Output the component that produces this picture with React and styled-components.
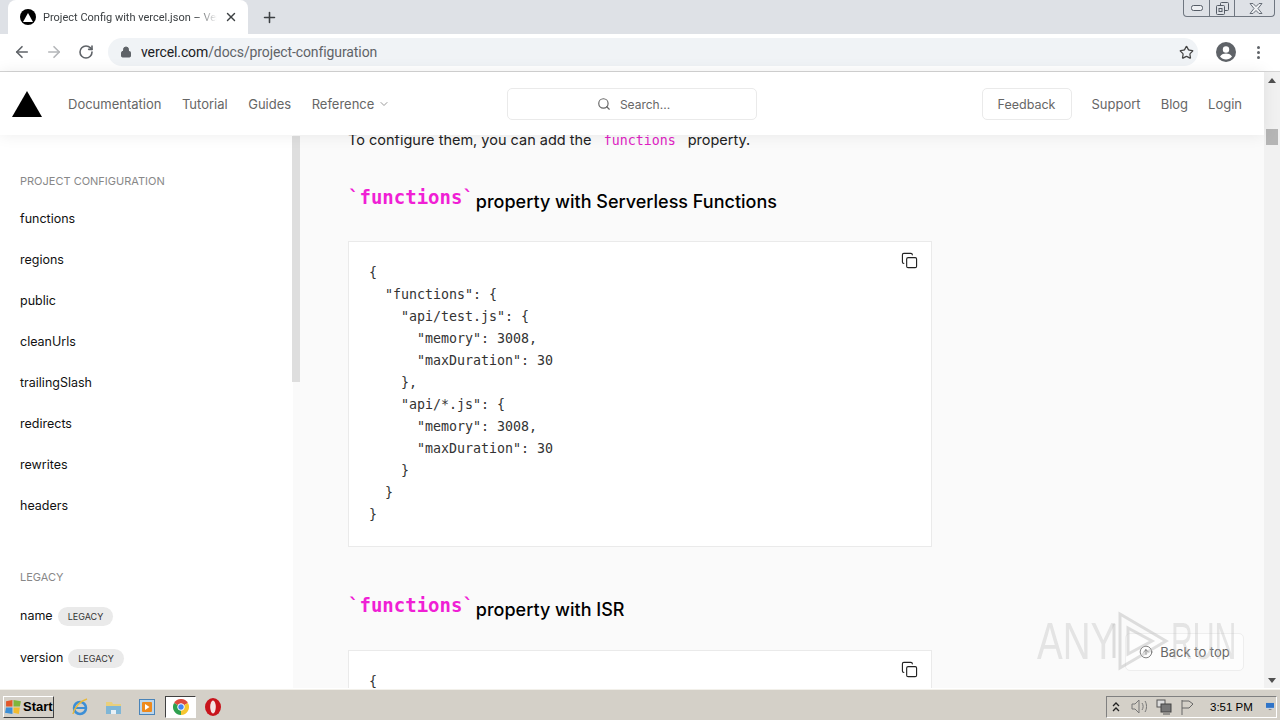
import React from 'react';
import styled, { createGlobalStyle } from 'styled-components';
import { Search, ChevronDown, Copy, ArrowUpCircle, ArrowLeft, ArrowRight, RotateCw, Lock, Star, X, Plus } from 'lucide-react';

const Global = createGlobalStyle`
  html, body { margin: 0; padding: 0; height: 720px; overflow: hidden; background: #fff; }
  body { font-family: Inter, "Noto Sans", sans-serif; }
  * { box-sizing: border-box; }
`;

const Screen = styled.div`
  position: relative;
  width: 1280px;
  height: 720px;
  display: flex;
  flex-direction: column;
  overflow: hidden;
`;

/* browser chrome */
const TabStrip = styled.div`
  height: 34px;
  background: #dee1e6;
  display: flex;
  padding-left: 8px;
  position: relative;
`;
const Tab = styled.div`
  width: 240px;
  height: 34px;
  background: #fff;
  border-radius: 8px 8px 0 0;
  display: flex;
  align-items: center;
  padding: 0 9px 0 12px;
  gap: 7px;
`;
const Favicon = styled.span`
  width: 16px;
  height: 16px;
  border-radius: 50%;
  background: #000;
  display: flex;
  align-items: center;
  justify-content: center;
  flex-shrink: 0;
`;
const TabTitle = styled.span`
  font: 11px Roboto, sans-serif;
  color: #3c4043;
  width: 174px;
  white-space: nowrap;
  overflow: hidden;
  -webkit-mask-image: linear-gradient(to right, #000 88%, transparent);
`;
const NewTab = styled.span`
  margin-left: 13px;
  height: 34px;
  display: flex;
  align-items: center;
  color: #3c4043;
`;
const WindowButtons = styled.div`
  position: absolute;
  right: 5px;
  top: 0;
  width: 92px;
  height: 17px;
  display: grid;
  grid-template-columns: 25px 25px 42px;
  border: 1px solid #6f7680;
  border-top: none;
  border-radius: 0 0 4px 4px;
`;
const WindowButton = styled.span`
  display: flex;
  align-items: center;
  justify-content: center;
  & + & { border-left: 1px solid #6f7680; }
`;
const Toolbar = styled.div`
  height: 38px;
  background: #fff;
  border-bottom: 1px solid #d5d5d5;
  display: flex;
  align-items: center;
  padding: 0 0 1px 13px;
`;
const NavIcon = styled.span`
  width: 18px;
  display: flex;
  justify-content: center;
  margin-right: ${p => p.$gap}px;
  color: ${p => p.$faded ? '#b4b6b9' : '#5f6368'};
`;
const Omnibox = styled.div`
  width: 1090px;
  height: 28px;
  border-radius: 14px;
  background: #f0f3f6;
  margin-left: 13px;
  display: flex;
  align-items: center;
  padding: 0 4px 0 12px;
  color: #5f6368;
`;
const Url = styled.span`
  font: 14px Roboto, sans-serif;
  color: #202124;
  margin-left: 9px;
  flex: 1;
  letter-spacing: -0.1px;
  & span { color: #5f6368; }
`;
const Avatar = styled.span`
  margin-left: 18px;
  width: 20px;
  height: 20px;
  display: block;
`;
const MenuDots = styled.span`
  margin-left: 21px;
  display: flex;
  flex-direction: column;
  gap: 2px;
  & i { width: 3px; height: 3px; border-radius: 50%; background: #5f6368; display: block; }
`;

/* page */
const Viewport = styled.div`
  flex: 1;
  height: 619px;
  display: flex;
  min-height: 0;
`;
const Page = styled.div`
  width: 1264px;
  display: flex;
  flex-direction: column;
  background: #fafafa;
`;
const Header = styled.header`
  height: 63px;
  background: #fff;
  box-shadow: 0 0 15px rgba(0, 0, 0, 0.08);
  display: flex;
  align-items: center;
  padding: 1px 22px 0 12px;
  position: relative;
  z-index: 2;
  flex-shrink: 0;
`;
const Nav = styled.nav`
  display: flex;
  align-items: center;
  gap: 20.5px;
  margin-left: 26px;
  width: 439px;
`;
const NavLink = styled.span`
  font-size: 13px;
  color: #666;
  display: flex;
  align-items: center;
  gap: 4px;
  white-space: nowrap;
`;
const SearchBox = styled.div`
  width: 250px;
  height: 32px;
  border: 1px solid #eaeaea;
  border-radius: 5px;
  display: flex;
  align-items: center;
  justify-content: center;
  gap: 9px;
  padding-left: 3px;
  font-size: 12px;
  color: #666;
`;
const HeaderRight = styled.div`
  margin-left: auto;
  display: flex;
  align-items: center;
  gap: 20px;
`;
const Feedback = styled.span`
  width: 90px;
  height: 32px;
  border: 1px solid #eaeaea;
  border-radius: 5px;
  font-size: 12.5px;
  color: #666;
  display: flex;
  align-items: center;
  justify-content: center;
`;
const Body = styled.div`
  flex: 1;
  display: flex;
  min-height: 0;
`;
const Sidebar = styled.aside`
  width: 293px;
  background: #fff;
  padding: 0 20px;
  overflow: hidden;
  flex-shrink: 0;
`;
const SideTitle = styled.div`
  font-size: 11px;
  color: #888;
  height: 18px;
  line-height: 18px;
  margin: ${p => p.$top}px 0 ${p => p.$bottom}px;
  white-space: nowrap;
`;
const SideItem = styled.div`
  height: ${p => p.$h || 41}px;
  display: flex;
  align-items: center;
  gap: 5px;
  font-size: 12.5px;
  color: #111;
`;
const Chip = styled.span`
  height: 19px;
  padding: 0 10px;
  border-radius: 10px;
  background: #eaeaea;
  font-size: 9px;
  color: #333;
  display: flex;
  align-items: center;
  margin-top: 2px;
`;
const Rail = styled.div`
  width: 8px;
  margin-left: -1px;
  flex-shrink: 0;
  position: relative;
  z-index: 1;
`;
const RailThumb = styled.div`
  height: 246px;
  margin-top: 1px;
  background: #dedede;
`;
const Main = styled.main`
  flex: 1;
  overflow: hidden;
  padding: 0 0 0 48px;
`;
const Intro = styled.p`
  margin: -7px 0 0;
  height: 24px;
  line-height: 24px;
  font-size: 14.5px;
  color: #222;
  display: flex;
  white-space: pre;
`;
const InlineCode = styled.code`
  font: 13.3px "DejaVu Sans Mono", monospace;
  line-height: 26px;
  color: #e01fc4;
  margin: 0 12px 0 8px;
`;
const Heading = styled.h2`
  margin: ${p => p.$top}px 0 0;
  height: 28px;
  display: flex;
  align-items: flex-end;
  font-size: 18px;
  font-weight: 500;
  line-height: 28px;
  color: #000;
  white-space: pre;
`;
const HeadingCode = styled.code`
  font: bold 19px "DejaVu Sans Mono", monospace;
  color: #f01fd5;
  position: relative;
  top: -8px;
  margin-right: 2px;
`;
const CodeCard = styled.div`
  position: relative;
  width: 584px;
  margin-top: ${p => p.$top}px;
  padding: 20px 20px 20px;
  background: #fff;
  border: 1px solid #eaeaea;
`;
const CodeText = styled.pre`
  margin: 0;
  font: 13.3px/22px "DejaVu Sans Mono", monospace;
  color: #333;
`;
const CopyButton = styled.span`
  position: absolute;
  top: 10px;
  right: 13px;
  color: #222;
  display: flex;
`;
const Scrollbar = styled.div`
  width: 16px;
  background: #f1f1f1;
  display: flex;
  flex-direction: column;
  align-items: center;
  position: relative;
`;
const ArrowUp = styled.span`
  margin-top: 6px;
  border: 4px solid transparent;
  border-top: none;
  border-bottom: 5px solid #505050;
`;
const ScrollThumb = styled.div`
  width: 12px;
  height: 16px;
  margin-top: 46px;
  background: #b5b5b5;
`;
const ArrowDown = styled.span`
  margin-top: auto;
  margin-bottom: 5px;
  border: 4px solid transparent;
  border-bottom: none;
  border-top: 5px solid #505050;
`;
const BackToTop = styled.div`
  position: absolute;
  left: 1125px;
  top: 633px;
  width: 119px;
  height: 38px;
  background: rgba(255, 255, 255, 0.6);
  border: 1px solid #eee;
  border-radius: 5px;
  display: flex;
  align-items: center;
  justify-content: center;
  gap: 7px;
  font-size: 13px;
  color: #666;
  z-index: 3;
`;
const Watermark = styled.div`
  position: absolute;
  left: 1037px;
  top: 610px;
  width: 200px;
  height: 62px;
  display: flex;
  align-items: center;
  z-index: 4;
  pointer-events: none;
  & svg { flex-shrink: 0; margin: 0 1px 0 5px; }
`;
const WatermarkWord = styled.span`
  display: block;
  width: ${p => p.$w}px;
  font: 52px/62px "Liberation Sans", sans-serif;
  color: rgba(185, 185, 185, 0.34);
  transform: scaleX(${p => p.$scale});
  transform-origin: left;
  white-space: nowrap;
`;

/* taskbar */
const Taskbar = styled.div`
  height: 31px;
  background: #d4d0c8;
  border-top: 1px solid #f2f0ea;
  margin-top: 1px;
  display: flex;
  align-items: center;
  padding: 3px 3px 0;
  flex-shrink: 0;
`;
const StartButton = styled.div`
  width: 51px;
  height: 22px;
  background: #d4d0c8;
  border: 1px solid;
  border-color: #fff #404040 #404040 #fff;
  display: flex;
  align-items: center;
  gap: 1px;
  padding-left: 1px;
  font: bold 13px "Liberation Sans", sans-serif;
  color: #000;
`;
const Quick = styled.div`
  display: flex;
  align-items: center;
  margin-left: 9px;
`;
const QuickSlot = styled.span`
  width: ${p => p.$w || 33.5}px;
  height: 22px;
  display: flex;
  align-items: center;
  justify-content: center;
  ${p => p.$active && `
    margin-left: 1.5px;
    background: #fff;
    border: 1px solid;
    border-color: #404040 #fff #fff #404040;
  `}
`;
const Tray = styled.div`
  margin-left: auto;
  width: 171px;
  height: 22px;
  border: 1px solid;
  border-color: #808080 #fff #fff #808080;
  display: flex;
  align-items: center;
  padding: 0 2px 0 5px;
  color: #444;
`;
const TrayIcon = styled.span`
  display: flex;
  margin-right: ${p => p.$gap}px;
`;
const Clock = styled.span`
  font: 11.5px "Liberation Sans", sans-serif;
  color: #000;
  white-space: nowrap;
  margin-right: 13px;
`;

const block1 = `{
  "functions": {
    "api/test.js": {
      "memory": 3008,
      "maxDuration": 30
    },
    "api/*.js": {
      "memory": 3008,
      "maxDuration": 30
    }
  }
}`;

const sideItems = ['functions', 'regions', 'public', 'cleanUrls', 'trailingSlash', 'redirects', 'rewrites', 'headers'];

export default function App() {
  return (
    <Screen>
      <Global />
      <TabStrip>
        <Tab>
          <Favicon>
            <svg width="10" height="9" viewBox="0 0 10 9"><path d="M5 0l5 9H0z" fill="#fff" /></svg>
          </Favicon>
          <TabTitle>Project Config with vercel.json – Vercel</TabTitle>
          <X size={14} strokeWidth={2.4} color="#3c4043" />
        </Tab>
        <NewTab><Plus size={17} strokeWidth={2.2} /></NewTab>
        <WindowButtons>
          <WindowButton>
            <svg width="12" height="6" viewBox="0 0 12 6" fill="#eef0f3" stroke="#555c66"><rect x=".5" y=".5" width="11" height="5" rx="2" /></svg>
          </WindowButton>
          <WindowButton>
            <svg width="13" height="13" viewBox="0 0 13 13" fill="#dee1e6" stroke="#555c66">
              <rect x="4.500" y=".5" width="8" height="8" rx="1" />
              <rect x=".5" y="3.500" width="8" height="9" rx="1" />
              <rect x="3" y="6.500" width="3" height="3" />
            </svg>
          </WindowButton>
          <WindowButton>
            <svg width="14" height="11" viewBox="0 0 14 11" fill="#eef0f3" stroke="#666d77">
              <path d="M1 .5h3l3 3 3-3h3L9 5.500l4 5h-3l-3-3-3 3H1l4-5z" />
            </svg>
          </WindowButton>
        </WindowButtons>
      </TabStrip>
      <Toolbar>
        <NavIcon $gap={14}><ArrowLeft size={18} strokeWidth={2.2} /></NavIcon>
        <NavIcon $gap={14} $faded><ArrowRight size={18} strokeWidth={2.2} /></NavIcon>
        <NavIcon $gap={0}><RotateCw size={16} strokeWidth={2.4} /></NavIcon>
        <Omnibox>
          <Lock size={12} fill="#5f6368" strokeWidth={2} />
          <Url>vercel.com<span>/docs/project-configuration</span></Url>
          <Star size={15} strokeWidth={2} color="#444" />
        </Omnibox>
        <Avatar>
          <svg width="20" height="20" viewBox="0 0 20 20">
            <circle cx="10" cy="10" r="10" fill="#5f6368" />
            <circle cx="10" cy="7.5" r="3.2" fill="#fff" />
            <path d="M4 14.5c1.5-2.4 4-3 6-3s4.500.6 6 3c-1.500 2-3.700 3-6 3s-4.500-1-6-3z" fill="#fff" />
          </svg>
        </Avatar>
        <MenuDots><i /><i /><i /></MenuDots>
      </Toolbar>
      <Viewport>
        <Page>
          <Header>
            <svg width="30" height="26" viewBox="0 0 30 26"><path d="M15 0l15 26H0z" fill="#000" /></svg>
            <Nav>
              <NavLink>Documentation</NavLink>
              <NavLink>Tutorial</NavLink>
              <NavLink>Guides</NavLink>
              <NavLink>Reference <ChevronDown size={12} color="#999" /></NavLink>
            </Nav>
            <SearchBox><Search size={14} color="#666" />Search...</SearchBox>
            <HeaderRight>
              <Feedback>Feedback</Feedback>
              <NavLink>Support</NavLink>
              <NavLink>Blog</NavLink>
              <NavLink>Login</NavLink>
            </HeaderRight>
          </Header>
          <Body>
            <Sidebar>
              <SideTitle $top={37} $bottom={8}>PROJECT CONFIGURATION</SideTitle>
              {sideItems.map(name => <SideItem key={name}>{name}</SideItem>)}
              <SideTitle $top={42} $bottom={8}>LEGACY</SideTitle>
              <SideItem $h={42}>name <Chip>LEGACY</Chip></SideItem>
              <SideItem $h={42}>version <Chip>LEGACY</Chip></SideItem>
            </Sidebar>
            <Rail><RailThumb /></Rail>
            <Main>
              <Intro>To configure them, you can add the <InlineCode>functions</InlineCode>property.</Intro>
              <Heading $top={36}><HeadingCode>`functions`</HeadingCode>property with Serverless Functions</Heading>
              <CodeCard $top={25}>
                <CopyButton><Copy size={17} strokeWidth={1.6} /></CopyButton>
                <CodeText>{block1}</CodeText>
              </CodeCard>
              <Heading $top={49}><HeadingCode>`functions`</HeadingCode>property with ISR</Heading>
              <CodeCard $top={26}>
                <CopyButton><Copy size={17} strokeWidth={1.6} /></CopyButton>
                <CodeText>{'{'}</CodeText>
              </CodeCard>
            </Main>
          </Body>
        </Page>
        <Scrollbar>
          <ArrowUp />
          <ScrollThumb />
          <ArrowDown />
        </Scrollbar>
      </Viewport>
      <Watermark>
        <WatermarkWord $w={68} $scale={0.74}>ANY</WatermarkWord>
        <svg width="60" height="62" viewBox="0 0 60 62" fill="none" stroke="rgba(185,185,185,0.45)" strokeWidth="3">
          <path d="M4 14v34M10 4l46 27-46 27z" />
          <path d="M18 18l24 13-24 13z" />
        </svg>
        <WatermarkWord $w={60} $scale={0.58}>RUN</WatermarkWord>
      </Watermark>
      <BackToTop><ArrowUpCircle size={14} strokeWidth={1.4} />Back to top</BackToTop>
      <Taskbar>
        <StartButton>
          <svg width="17" height="16" viewBox="0 0 16 15">
            <path d="M1 2l6-1v6H1z" fill="#e2582a" />
            <path d="M8 1l7 1-1 5H8z" fill="#7fb53c" />
            <path d="M1 8h6v6l-7-1z" fill="#3d8fd6" />
            <path d="M8 8h6l-1 6-5-1z" fill="#f2bb2e" />
          </svg>
          Start
        </StartButton>
        <Quick>
          <QuickSlot>
            <svg width="18" height="18" viewBox="0 0 18 18" fill="none">
              <circle cx="9" cy="10" r="6" stroke="#3d8fd6" strokeWidth="2.500" />
              <path d="M3.500 10h11" stroke="#3d8fd6" strokeWidth="2" />
              <path d="M2 16C3 10 9 3 16 1" stroke="#e8b93a" strokeWidth="1.500" />
            </svg>
          </QuickSlot>
          <QuickSlot>
            <svg width="17" height="16" viewBox="0 0 17 16">
              <path d="M1 3h6l1 2h8v10H1z" fill="#e9cf7c" />
              <path d="M1 7h15v8H1z" fill="#7fb6d6" />
              <path d="M6 11h5v4H6z" fill="#e9f1f6" />
            </svg>
          </QuickSlot>
          <QuickSlot>
            <svg width="16" height="16" viewBox="0 0 16 16">
              <rect x=".5" y=".5" width="15" height="15" fill="#bcd6ec" stroke="#4a84b8" />
              <rect x="3" y="3" width="10" height="10" rx="1" fill="#ee8a1d" />
              <path d="M6 5l4.500 3L6 11z" fill="#fff" />
            </svg>
          </QuickSlot>
          <QuickSlot $active $w={31}>
            <svg width="16" height="16" viewBox="0 0 16 16">
              <path d="M8 8L1.070 4A8 8 0 0 1 14.930 4z" fill="#dd4b3e" />
              <path d="M8 8L14.930 4A8 8 0 0 1 8 16z" fill="#f6c62f" />
              <path d="M8 8L8 16A8 8 0 0 1 1.070 4z" fill="#2fa04f" />
              <circle cx="8" cy="8" r="3.300" fill="#4285f4" stroke="#fff" />
            </svg>
          </QuickSlot>
          <QuickSlot>
            <svg width="16" height="18" viewBox="0 0 16 18">
              <ellipse cx="8" cy="9" rx="8" ry="9" fill="#c8141c" />
              <ellipse cx="8" cy="9" rx="2.800" ry="6.500" fill="#f3e4e4" />
            </svg>
          </QuickSlot>
        </Quick>
        <Tray>
          <TrayIcon $gap={11}>
            <svg width="8" height="10" viewBox="0 0 8 10" fill="none" stroke="#222" strokeWidth="1.300"><path d="M1 4l3-3 3 3M1 9l3-3 3 3" /></svg>
          </TrayIcon>
          <TrayIcon $gap={8}>
            <svg width="17" height="15" viewBox="0 0 17 15" fill="none" stroke="#777"><path d="M1 5h3l4-4v13l-4-4H1zM11 4c1.500 2 1.500 5 0 7M14 2c2 3 2 8 0 11" /></svg>
          </TrayIcon>
          <TrayIcon $gap={8}>
            <svg width="16" height="16" viewBox="0 0 16 16"><rect x="1" y="1" width="8" height="7" fill="#ddd" stroke="#555" /><rect x="5" y="5" width="10" height="8" fill="#777" stroke="#444" /><path d="M7 15h7" stroke="#555" /></svg>
          </TrayIcon>
          <TrayIcon $gap={15}>
            <svg width="15" height="16" viewBox="0 0 15 16" fill="none" stroke="#666"><path d="M2 1v15M2 2h7l4 3-4 4H2" /></svg>
          </TrayIcon>
          <Clock>3:51 PM</Clock>
          <svg width="15" height="13" viewBox="0 0 15 13">
            <rect width="15" height="11" fill="#2f74c8" />
            <rect y="9" width="15" height="2" fill="#cfd8e6" />
            <rect x="5" y="11" width="5" height="2" fill="#888" />
          </svg>
        </Tray>
      </Taskbar>
    </Screen>
  );
}
